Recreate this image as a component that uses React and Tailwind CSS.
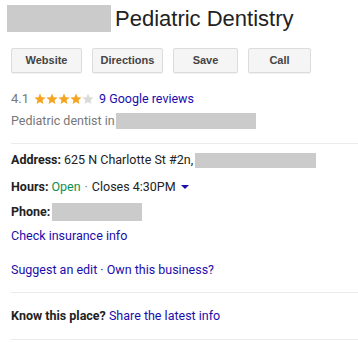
import React from 'react';

const Star = ({ filled }) => (
    <svg width="12" height="12" viewBox="0 0 24 24" className="block">
        <path
            d="M12 1.2l3.2 7.3 7.9.7-6 5.2 1.8 7.8L12 18.1 5.1 22.2l1.8-7.8-6-5.2 7.9-.7z"
            fill={filled ? '#f4a623' : '#dadada'}
        />
    </svg>
);

const ActionButton = ({ label, width }) => (
    <button
        className={`${width} h-[25px] bg-[#f5f5f5] border border-[#dcdcdc] rounded-[2px] text-[11px] font-bold text-[#444] font-['Liberation_Sans',Arial,sans-serif] shadow-[0_1px_0_rgba(0,0,0,0.05)]`}
    >
        {label}
    </button>
);

const Redacted = ({ className }) => <span className={`inline-block bg-[#cbcbcb] align-middle ${className}`} />;

export default function App() {
    return (
        <div className="w-[358px] h-[342px] bg-white overflow-hidden font-['Roboto',Arial,sans-serif] text-[12.5px] text-[#222]">
            {/* Title */}
            <div className="flex items-center pl-[7px] pt-[5px] h-[32px]">
                <Redacted className="w-[104px] h-[27px]" />
                <span className="ml-[4px] text-[22px] leading-[27px] text-[#222] font-['Liberation_Sans',Arial,sans-serif]">
                    Pediatric Dentistry
                </span>
            </div>

            {/* Buttons */}
            <div className="flex gap-[10px] pl-[11px] mt-[16px]">
                <ActionButton label="Website" width="w-[71px]" />
                <ActionButton label="Directions" width="w-[71px]" />
                <ActionButton label="Save" width="w-[65px]" />
                <ActionButton label="Call" width="w-[63px]" />
            </div>

            {/* Rating */}
            <div className="flex items-center pl-[11px] mt-[18px] h-[16px]">
                <span className="text-[13px] text-[#777]">4.1</span>
                <span className="flex ml-[5px]">
                    <Star filled />
                    <Star filled />
                    <Star filled />
                    <Star filled />
                    <Star />
                </span>
                <a className="ml-[5px] text-[12.5px] text-[#1a0dab]">9 Google reviews</a>
            </div>

            {/* Category */}
            <div className="flex items-center pl-[11px] mt-[6px] h-[16px]">
                <span className="text-[#777]">Pediatric dentist in</span>
                <Redacted className="ml-[1px] w-[140px] h-[16px]" />
            </div>

            <div className="ml-[11px] mt-[14px] border-t border-[#ebebeb]" />

            {/* Details */}
            <div className="pl-[11px] flex flex-col">
                <div className="flex items-center h-[16px] mt-[8px]">
                    <span className="font-bold">Address:</span>
                    <span className="ml-[3px]">625 N Charlotte St #2n,</span>
                    <Redacted className="ml-[2px] w-[121px] h-[15px]" />
                </div>
                <div className="flex items-center h-[16px] mt-[11px]">
                    <span className="font-bold">Hours:</span>
                    <span className="ml-[3px] text-[#0d904f]">Open</span>
                    <span className="ml-[4px] text-[#777]">·</span>
                    <span className="ml-[4px]">Closes 4:30PM</span>
                    <svg width="8" height="5" viewBox="0 0 8 5" className="ml-[5px]">
                        <path d="M0 0h8L4 4z" fill="#1a0dab" />
                    </svg>
                </div>
                <div className="flex items-center h-[18px] mt-[8px]">
                    <span className="font-bold">Phone:</span>
                    <Redacted className="ml-[2px] w-[90px] h-[18px]" />
                </div>
                <a className="h-[16px] mt-[7px] text-[#1a0dab] leading-[16px]">Check insurance info</a>
                <div className="h-[16px] mt-[18px] text-[#1a0dab] leading-[16px]">
                    Suggest an edit · Own this business?
                </div>
            </div>

            <div className="ml-[11px] mt-[14px] border-t border-[#ebebeb]" />

            <div className="pl-[11px] h-[16px] mt-[15px] leading-[16px]">
                <span className="font-bold">Know this place?</span>{' '}
                <a className="text-[#1a0dab]">Share the latest info</a>
            </div>

            <div className="ml-[11px] mt-[15px] border-t border-[#ebebeb]" />
        </div>
    );
}
